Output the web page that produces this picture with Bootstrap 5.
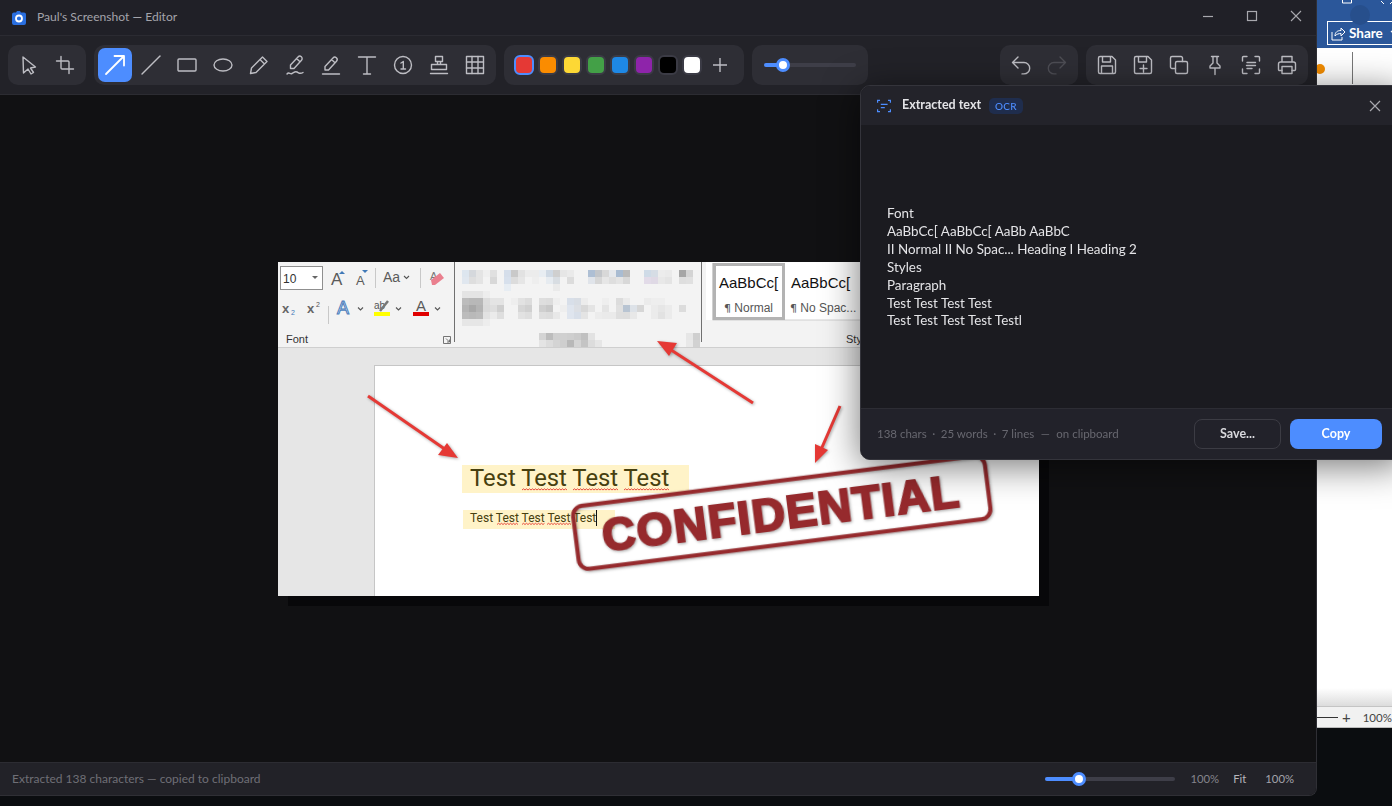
<!DOCTYPE html>
<html lang="en">
<head>
<meta charset="utf-8">
<title>Paul's Screenshot — Editor</title>
<link rel="stylesheet" href="https://cdn.jsdelivr.net/npm/bootstrap@5.3.0/dist/css/bootstrap.min.css">
<style>
html,body{height:100%;margin:0;overflow:hidden;background:#0b0d10;font-family:Lato,"Liberation Sans",sans-serif}
.desk{width:1392px;height:806px;overflow:hidden;position:relative}
.appwin{width:1317px;height:796px;background:#111113;border-right:1px solid #2f2f35;border-bottom:1px solid #2f2f35;border-bottom-right-radius:8px;overflow:hidden;flex:none}
.titlebar{height:36px;background:#202027;border-bottom:1px solid #2b2b32;color:#a4a4ab;font-size:12.100px;padding-left:12px}
.titlebar .ttl{margin-left:11px}
.winrow{margin-right:-2px;align-self:flex-start}
.winbtn{width:44px;height:32px;color:#a8a8ae}
.toolbar{height:59px;background:#222228;border-bottom:1px solid #2c2c32;padding:9px 8px 0 8px}
.tgroup{height:40px;background:#2e2e35;border-radius:10px;padding:3px 4px;gap:2px}
.tbtn{width:34px;height:34px;border-radius:7px;color:#bdbdc3;flex:none}
.tbtn svg{width:24px;height:24px;fill:none;stroke:currentColor;stroke-width:1.4;stroke-linecap:round;stroke-linejoin:round}
.tbtn.on{background:#4d8dff;color:#fff}
.tbtn.off{color:#4e4e55}
.swatches{padding:3px 10px;gap:4px}
.swatch{width:20px;height:20px;border-radius:6px;border:2px solid #3b3b45;flex:none}
.swatch.cur{border-color:#4d8dff}
.plusbtn{width:28px;height:34px;color:#bdbdc3}
.sizegrp{width:116px;padding:0 12px}
.sliderbar{height:4px;background:#3e3e48;border-radius:2px;position:relative}
.sliderbar i{display:block;height:4px;background:#4d8dff;border-radius:2px}
.sliderbar b{position:absolute;top:-5px;width:14px;height:14px;border-radius:50%;background:#fff;border:3px solid #4d8dff}
.canvasarea{flex:1 1 auto;min-height:0;background:#111113}
.shot{width:761px;height:334px;box-shadow:10px 10px 0 #08080a;display:block;background:#fff}
.statusline{height:33px;background:#222228;border-top:1px solid #2c2c32;font-size:12px;color:#6f6f76;padding:0 22px 0 12px}
.zoombar{width:130px}
.zdim{color:#85858c;margin-left:15px;font-size:11.300px}
.zlit{color:#b6b6bc;margin-left:14px;font-size:11.300px}
.zlit2{color:#a4a4ab;margin-left:19px;font-size:11.300px}
.wordbit{width:75px;height:728px;background:#fff;flex:none;position:relative;overflow:hidden;border-bottom:1px solid #bbb}
.wordtop{height:48px;background:#2b579a;padding:21px 0 0 10px}
.wordshare{width:76px;height:24px;border:1.5px solid #fff;color:#fff;font-size:13.500px;font-weight:700;padding-left:3px;gap:3px}
.wordbody{height:658px;padding-top:4px;background:linear-gradient(#fff 640px,#dcdcdc)}
.wordrule{width:1px;height:32px;background:#777;margin-left:35px}
.orangedot{position:absolute;left:-2px;top:64px;width:10px;height:10px;border-radius:50%;background:#f28c00}
.wordavatar{position:absolute;left:33px;top:5px;width:20px;height:20px;border-radius:50%;background:#274f8c}
.wordglyph{position:absolute;left:0;top:0}
.wordstat{height:22px;background:#f1f1f1;border-top:1px solid #c4c4c4;font-size:11.500px;color:#444}
.wordstat i{display:block;width:21px;height:1px;background:#333;margin:0 4px 0 0;flex:none}
.wordstat span{margin-right:12px;font-size:15px;line-height:1;flex:none}
.wordstat em{font-style:normal;flex:none}
.ocrpanel{position:absolute;left:860px;top:85px;width:545px;height:375px;border:1px solid #34343b;border-radius:10px;background:#1b1b20;box-shadow:0 6px 36px rgba(0,0,0,.55);overflow:hidden}
.ocrhead{height:39px;background:#23232a;padding-left:15px}
.ocrhead .ttl2{font-size:12.500px;font-weight:700;color:#e3e3e6;margin-left:10px}
.ocrbadge{background:#1f2d4d;color:#4d8dff;font-size:10px;font-weight:500;border-radius:5px;padding:3px 6px;margin-left:8px;line-height:10px;letter-spacing:.2px}
.ocrx{margin-left:auto;margin-right:23px;color:#a8a8ae}
.ocrbody{height:283px;padding:80px 0 0 26px;font-size:13.400px;line-height:17.900px;color:#e4e4e7;white-space:pre}
.ocrfoot{height:51px;background:#22222a;border-top:1px solid #2d2d34;padding:0 0 0 16px;font-size:11.500px;color:#686870}
.ocrfoot .dotsep{margin:0 5.500px}
.ocrfoot .dashsep{margin:0 6.500px}
.btn.ghostbtn{width:87px;height:30px;font-size:12.500px;font-weight:700;line-height:1;color:#d9d9dd;border:1px solid #3c3c44;border-radius:8px;background:transparent;padding:0;margin-left:auto}
.btn.bluebtn{width:92px;height:30px;font-size:12.500px;font-weight:700;line-height:1;color:#fff;border:0;border-radius:8px;background:#4d8dff;padding:0;margin-left:9px;margin-right:22px}
.annot{filter:drop-shadow(1.5px 1.5px 1.5px rgba(0,0,0,.35))}
.ribtxt{font-family:"Liberation Sans",sans-serif}
.stamptxt{font-family:"Liberation Sans",sans-serif;font-weight:700}
</style>
</head>
<body>
<div class="desk d-flex align-items-start">
  <div class="appwin d-flex flex-column">
    <div class="titlebar d-flex align-items-center">
      <svg width="14" height="15" viewBox="0 0 14 15"><path d="M2 2.500h2L5 1h3l1 1.500h3a2 2 0 0 1 2 2V13a2 2 0 0 1-2 2H2a2 2 0 0 1-2-2V4.500a2 2 0 0 1 2-2z" fill="#2a6fe0"/><circle cx="7" cy="8.500" r="3" fill="none" stroke="#fff" stroke-width="1.800"/></svg>
      <span class="ttl">Paul's Screenshot — Editor</span>
      <div class="d-flex ms-auto winrow">
        <div class="winbtn d-flex align-items-center justify-content-center"><svg width="12" height="12" viewBox="0 0 12 12"><path d="M1 6.500h10" stroke="currentColor" stroke-width="1.200"/></svg></div>
        <div class="winbtn d-flex align-items-center justify-content-center"><svg width="12" height="12" viewBox="0 0 12 12"><rect x="1.500" y="1.500" width="9" height="9" fill="none" stroke="currentColor" stroke-width="1.200"/></svg></div>
        <div class="winbtn d-flex align-items-center justify-content-center"><svg width="12" height="12" viewBox="0 0 12 12"><path d="M1 1l10 10M11 1L1 11" stroke="currentColor" stroke-width="1.100"/></svg></div>
      </div>
    </div>
    <div class="toolbar d-flex align-items-start">
      <div class="tgroup d-flex">
        <div class="tbtn d-flex align-items-center justify-content-center"><svg viewBox="0 0 24 24"><path d="M6 4l.5 16 4.500-4 3 5 2.500-1.500-3-4.500 5-1z"/></svg></div>
        <div class="tbtn d-flex align-items-center justify-content-center"><svg viewBox="0 0 24 24"><path d="M8 3.500V15a1 1 0 0 0 1 1h11.500M3.500 8H15a1 1 0 0 1 1 1v11.500"/></svg></div>
      </div>
      <div class="tgroup d-flex ms-2">
        <div class="tbtn on d-flex align-items-center justify-content-center"><svg viewBox="0 0 24 24"><path stroke-width="1.800" d="M3 21L21 3M11.500 3H21v9.500"/></svg></div>
        <div class="tbtn d-flex align-items-center justify-content-center"><svg viewBox="0 0 24 24"><path d="M3 21L21 3"/></svg></div>
        <div class="tbtn d-flex align-items-center justify-content-center"><svg viewBox="0 0 24 24"><rect x="3" y="6" width="18" height="12" rx="1"/></svg></div>
        <div class="tbtn d-flex align-items-center justify-content-center"><svg viewBox="0 0 24 24"><ellipse cx="12" cy="12" rx="9" ry="6"/></svg></div>
        <div class="tbtn d-flex align-items-center justify-content-center"><svg viewBox="0 0 24 24"><path d="M3.500 20.500l1-5.500L15.500 4l4.500 4.500L9 19.500zM13 6.500L17.500 11"/></svg></div>
        <div class="tbtn d-flex align-items-center justify-content-center"><svg viewBox="0 0 24 24"><path d="M7.500 15.500v-3.500l7.500-8a2.200 2.200 0 0 1 3.500 3.200l-7.500 8.300zM13.500 5.500l3.500 3.200M4 21c2-2.500 3 .5 5-.5s3-2.500 5-1.500 3 2.500 6 .5"/></svg></div>
        <div class="tbtn d-flex align-items-center justify-content-center"><svg viewBox="0 0 24 24"><path d="M6 17v-3.500l8-8.500a2.200 2.200 0 0 1 3.500 3.200l-8 8.800zM12.500 6.500l3.500 3.200M3.500 21h17"/></svg></div>
        <div class="tbtn d-flex align-items-center justify-content-center"><svg viewBox="0 0 24 24"><path d="M3.500 4h17M12 4v17M8.500 21h7"/></svg></div>
        <div class="tbtn d-flex align-items-center justify-content-center"><svg viewBox="0 0 24 24"><circle cx="12" cy="12" r="8.500"/><path d="M10 10l2.300-1.500V16M10 16h4.500"/></svg></div>
        <div class="tbtn d-flex align-items-center justify-content-center"><svg viewBox="0 0 24 24"><path d="M8.500 3.500h7v5h-7zM10.500 8.500v3M13.500 8.500v3M4.500 11.500h15v5h-15zM3.500 20.500h17"/></svg></div>
        <div class="tbtn d-flex align-items-center justify-content-center"><svg viewBox="0 0 24 24"><rect x="3.500" y="3.500" width="17" height="17"/><path d="M9 3.500v17M15 3.500v17M3.500 9h17M3.500 15h17"/></svg></div>
      </div>
      <div class="tgroup swatches d-flex align-items-center ms-2">
        <span class="swatch cur" style="background:#e53935"></span>
        <span class="swatch" style="background:#fb8c00"></span>
        <span class="swatch" style="background:#fdd835"></span>
        <span class="swatch" style="background:#43a047"></span>
        <span class="swatch" style="background:#1e88e5"></span>
        <span class="swatch" style="background:#8e24aa"></span>
        <span class="swatch" style="background:#000"></span>
        <span class="swatch" style="background:#fff"></span>
        <div class="plusbtn d-flex align-items-center justify-content-center"><svg width="16" height="16" viewBox="0 0 16 16"><path d="M8 1v14M1 8h14" stroke="currentColor" stroke-width="1.400"/></svg></div>
      </div>
      <div class="tgroup sizegrp d-flex align-items-center ms-2">
        <div class="sliderbar w-100"><i style="width:20%"></i><b style="left:12px"></b></div>
      </div>
      <div class="tgroup d-flex ms-auto">
        <div class="tbtn d-flex align-items-center justify-content-center"><svg viewBox="0 0 24 24"><path d="M9 15L3.500 9.500 9 4M3.500 9.500H15a5.700 5.700 0 0 1 0 11.400h-2"/></svg></div>
        <div class="tbtn off d-flex align-items-center justify-content-center"><svg viewBox="0 0 24 24"><path d="M15 15l5.500-5.500L15 4M20.500 9.500H9a5.700 5.700 0 0 0 0 11.400h2"/></svg></div>
      </div>
      <div class="tgroup d-flex ms-2">
        <div class="tbtn d-flex align-items-center justify-content-center"><svg viewBox="0 0 24 24"><path d="M5 3.500h12l3.500 3.500v12a1.500 1.500 0 0 1-1.500 1.500H5A1.500 1.500 0 0 1 3.500 19V5A1.500 1.500 0 0 1 5 3.500zM7.500 3.500V9h8V3.500M6.500 20.500v-7.500h11v7.500"/></svg></div>
        <div class="tbtn d-flex align-items-center justify-content-center"><svg viewBox="0 0 24 24"><path d="M5 3.500h12l3.500 3.500v12a1.500 1.500 0 0 1-1.500 1.500H5A1.500 1.500 0 0 1 3.500 19V5A1.500 1.500 0 0 1 5 3.500zM7.500 3.500V9h8V3.500M12.500 12v7M9 15.500h7"/></svg></div>
        <div class="tbtn d-flex align-items-center justify-content-center"><svg viewBox="0 0 24 24"><path d="M8.500 15.500H5A1.500 1.500 0 0 1 3.500 14V5A1.500 1.500 0 0 1 5 3.500h9A1.500 1.500 0 0 1 15.500 5v3.500"/><rect x="8.500" y="8.500" width="12" height="12" rx="1.500"/></svg></div>
        <div class="tbtn d-flex align-items-center justify-content-center"><svg viewBox="0 0 24 24"><path d="M8.500 3.500h7M10 3.500v6.500l-3 3v2h10v-2l-3-3V3.500M12 15v6.500"/></svg></div>
        <div class="tbtn d-flex align-items-center justify-content-center"><svg viewBox="0 0 24 24"><path d="M3.500 8V4.500a1 1 0 0 1 1-1H8M16 3.500h3.500a1 1 0 0 1 1 1V8M20.500 16v3.500a1 1 0 0 1-1 1H16M8 20.500H4.500a1 1 0 0 1-1-1V16M8 9.500h8.500M7.500 12.500h9M8 15.500h5"/></svg></div>
        <div class="tbtn d-flex align-items-center justify-content-center"><svg viewBox="0 0 24 24"><path d="M7 9V3.500h10V9M7 17.500H4.500a1 1 0 0 1-1-1V11a2 2 0 0 1 2-2h13a2 2 0 0 1 2 2v5.500a1 1 0 0 1-1 1H17"/><rect x="7" y="13.500" width="10" height="7"/></svg></div>
      </div>
    </div>
    <div class="canvasarea d-flex align-items-center justify-content-center">
      <svg class="shot" id="shot" width="761" height="334" viewBox="278 262 761 334" xmlns="http://www.w3.org/2000/svg">
        <rect x="278" y="262" width="761" height="86" fill="#f3f3f3"/>
        <rect x="278" y="347" width="761" height="1.500" fill="#cfcfcf"/>
        <rect x="278" y="348" width="761" height="248" fill="#e6e6e6"/>
        <rect x="374.500" y="365.500" width="680" height="240" fill="#fff" stroke="#c6c6c6"/>
        <g id="mosaic" shape-rendering="crispEdges"></g>
        <g class="ribtxt">
          <rect x="280.500" y="266.500" width="42" height="23" fill="#fff" stroke="#8f8f8f"/>
          <text x="283" y="283" font-size="12" fill="#333">10</text>
          <path d="M312 276h6l-3 3z" fill="#666"/>
          <text x="331" y="285" font-size="17" fill="#5a5a5a">A</text><path d="M339 274l3-3 3 3z" fill="#3f79b8"/>
          <text x="356" y="285" font-size="13" fill="#5a5a5a">A</text><path d="M362 270h6l-3 3z" fill="#3f79b8"/>
          <path d="M375.500 268v20M420.500 268v20M328.500 306v18" stroke="#c8c8c8"/>
          <text x="383" y="282" font-size="14" fill="#5a5a5a">Aa</text>
          <path d="M404 276l2.500 2.500 2.500-2.500M358 307.500l2.500 2.500 2.500-2.500M396 307.500l2.500 2.500 2.500-2.500M435 307.500l2.500 2.500 2.500-2.500" fill="none" stroke="#555" stroke-width="1.100"/>
          <text x="430" y="280" font-size="11" fill="#777">A</text>
          <path d="M431 280l9-7 4 5-9 7h-3z" fill="#ea7f8e"/>
          <text x="282" y="313" font-size="13" font-weight="700" fill="#666">x</text><text x="291" y="315" font-size="7" fill="#3f79b8">2</text>
          <text x="307" y="313" font-size="13" font-weight="700" fill="#666">x</text><text x="316" y="307" font-size="7" fill="#555">2</text>
          <text x="337" y="314" font-size="18" fill="#e9f1fa" stroke="#4a7dbb" stroke-width="1">A</text>
          <text x="374" y="309" font-size="10" fill="#555">ab</text>
          <path d="M380 311l8-10" stroke="#777" stroke-width="2.500"/>
          <rect x="374" y="312" width="16" height="4" fill="#ffff00"/>
          <text x="416" y="311" font-size="15" fill="#5a5a5a">A</text>
          <rect x="413" y="312" width="16" height="4" fill="#e00000"/>
          <text x="286" y="343" font-size="11" fill="#333">Font</text>
          <path d="M443.500 336.500h7v7h-7zM446 338.500l3.500 3.500M449.500 339.500V342H447" fill="none" stroke="#666" stroke-width=".9"/>
          <path d="M454.500 262v80M701.500 262v80" stroke="#707070" stroke-width="1"/>
          <rect x="706" y="262" width="160" height="58" fill="#fff"/>
          <path d="M712.500 263v57H860" fill="none" stroke="#d0d0d0"/>
          <rect x="714.500" y="264.500" width="69" height="54" fill="#fff" stroke="#b3b3b3" stroke-width="3"/>
          <text x="719" y="288" font-size="15" fill="#111">AaBbCc[</text>
          <text x="791" y="288" font-size="15" fill="#111">AaBbCc[</text>
          <text x="724" y="312" font-size="12" fill="#555"><tspan font-family="'DejaVu Sans',sans-serif" font-size="11">¶</tspan> Normal</text>
          <text x="790" y="312" font-size="12" fill="#555"><tspan font-family="'DejaVu Sans',sans-serif" font-size="11">¶</tspan> No Spac...</text>
          <text x="846" y="343" font-size="11" fill="#333">Sty</text>
        </g>
        <rect x="462" y="465" width="227" height="28" fill="#fff3c8"/>
        <rect x="463" y="510" width="152" height="19" fill="#fff3c8"/>
        <text x="470" y="486" font-family="Roboto,sans-serif" font-size="23.800" fill="#47400f">Test Test Test Test</text>
        <text x="470" y="522" font-family="Roboto,sans-serif" font-size="12" fill="#47400f">Test Test Test Test Test</text>
        <path d="M596.500 510v16" stroke="#111"/>
        <g id="squig" fill="none" stroke="#e5392f" stroke-width=".9"></g>
        <g class="annot">
          <path d="M368 396L449 452" stroke="#e53935" stroke-width="3" fill="none"/><path d="M458 458l-20-3 9-12z" fill="#e53935"/>
          <path d="M753 403L668 348" stroke="#e53935" stroke-width="3" fill="none"/><path d="M657 341l20 2-8 13z" fill="#e53935"/>
          <path d="M840 406L820 452" stroke="#e53935" stroke-width="3" fill="none"/><path d="M815 463l0-19 13 6z" fill="#e53935"/>
          <g transform="rotate(-7.200 781.800 512.500)">
            <rect x="574.300" y="480.800" width="415" height="63.500" rx="10" fill="none" stroke="#962a2d" stroke-width="4"/>
            <text class="stamptxt" x="781" y="529" text-anchor="middle" font-size="46" letter-spacing="1.500" fill="#962a2d" stroke="#962a2d" stroke-width="2.200">CONFIDENTIAL</text>
          </g>
        </g>
      </svg>
    </div>
    <div class="statusline d-flex align-items-center">
      <span>Extracted 138 characters — copied to clipboard</span>
      <div class="zoombar ms-auto">
        <div class="sliderbar"><i style="width:26%"></i><b style="left:27px"></b></div>
      </div>
      <span class="zdim">100%</span><span class="zlit">Fit</span><span class="zlit2">100%</span>
    </div>
  </div>
  <div class="wordbit">
    <div class="wordtop">
      <div class="wordshare d-flex align-items-center">
        <svg width="15" height="15" viewBox="0 0 15 15" class="flex-shrink-0"><path d="M1 6v8h10v-3M4 10c0-4 2.500-5.500 6-5.500V2l4 4-4 4V7.500C8 7.500 5.500 8 4 10z" fill="none" stroke="#fff"/></svg>Share<svg width="8" height="6" viewBox="0 0 8 6" class="flex-shrink-0 ms-1"><path d="M1 1l3 3 3-3" fill="none" stroke="#fff" stroke-width="1.200"/></svg>
      </div>
    </div>
    <div class="wordbody"><div class="wordrule"></div></div>
    <span class="wordavatar"></span>
    <svg class="wordglyph" width="75" height="5" viewBox="0 0 75 5"><path d="M25.500-3h9v6h-9zM64 1l3 3M76 1l-3 3" fill="none" stroke="#fff"/></svg>
    <span class="orangedot"></span>
    <div class="wordstat d-flex align-items-center"><i></i><span>+</span><em>100%</em></div>
  </div>
  <div class="ocrpanel">
    <div class="ocrhead d-flex align-items-center">
      <svg width="16" height="16" viewBox="0 0 20 20" fill="none" stroke="#4d8dff" stroke-width="1.500"><path d="M2 6V3h3M15 3h3v3M18 14v3h-3M5 17H2v-3M6 8h8.500M6 12h5"/></svg>
      <span class="ttl2">Extracted text</span>
      <span class="ocrbadge">OCR</span>
      <svg class="ocrx" width="12" height="12" viewBox="0 0 12 12"><path d="M1 1l10 10M11 1L1 11" stroke="currentColor" stroke-width="1.200"/></svg>
    </div>
    <div class="ocrbody">Font
AaBbCc[ AaBbCc[ AaBb AaBbC
II Normal II No Spac... Heading I Heading 2
Styles
Paragraph
Test Test Test Test
Test Test Test Test Testl</div>
    <div class="ocrfoot d-flex align-items-center">
      <span>138 chars</span><span class="dotsep">·</span><span>25 words</span><span class="dotsep">·</span><span>7 lines</span><span class="dashsep">—</span><span>on clipboard</span>
      <button class="btn ghostbtn" type="button">Save...</button>
      <button class="btn bluebtn" type="button">Copy</button>
    </div>
  </div>
</div>
<script src="https://cdn.jsdelivr.net/npm/bootstrap@5.3.0/dist/js/bootstrap.bundle.min.js"></script>
<script>
var NS='http://www.w3.org/2000/svg';
var rows={
270:{0:'dde6ef',1:'d5d8dc',2:'e4e4e4',3:'efefef',4:'e0e0e0',6:'d5deea',7:'c9c9c9',8:'e2e2e2',9:'ececec',10:'ececec',11:'e8edf2',12:'cfd9e4',13:'cfcfcf',14:'e6e6e6',15:'eaeaea',18:'aebfd4',19:'c3c6ca',20:'d8d8d8',21:'e5e8ec',22:'a9bcd2',23:'bbbbbb',26:'cfdbe7',27:'d6dde5',28:'ececec',29:'eaeaea',31:'a6a6a6',32:'d4d4d4'},
277:{0:'e0e7ef',1:'dedede',2:'e4e4e4',4:'d8d8d8',6:'d7e0ec',7:'dcdcdc',8:'e6e6e6',10:'eeeeee',12:'e6ebf0',13:'d8dde2',15:'dcdcdc',18:'e0e4ea',19:'d6d6d6',20:'e6e6e6',21:'dedede',22:'e4e4e4',23:'d8d8d8',26:'e2dbe8',27:'dfd9e5',28:'e8e8e8',29:'e4e4e4',31:'dedede',32:'e0e0e0'},
284:{6:'e7edf3',13:'eaeaea'},
291:{0:'e4e4e4',1:'e4e4e4',2:'e4e4e4',3:'ededed'},
298:{0:'bcbcbc',1:'b8b8b8',2:'b8b8b8',3:'dcdcdc',4:'e4e4e4',5:'e4e4e4',7:'eeeeee',8:'e2e2e2',9:'dcdcdc',11:'dedede',12:'dcdcdc',13:'eeeeee',15:'d8dfe9',16:'d8dde4',17:'ececec',20:'eeeeee',22:'dcdcdc',23:'eaeaea',26:'ebebeb',27:'eeeeee',28:'eeeeee'},
305:{0:'b4b4b4',1:'a8a8a8',2:'b4b4b4',3:'dadada',4:'dedede',5:'cfcfcf',8:'d6d6d6',9:'d0d0d0',11:'cfcfcf',12:'c8c8c8',14:'eeeeee',15:'dfe5ee',16:'dcdfe4',17:'d8d8d8',18:'e4e4e4',20:'e4e4e4',22:'e0e0e0',23:'b8c4d2',24:'dde2e8',25:'d6d6d6',27:'ebebeb',28:'e6e6e6',29:'ebebeb',31:'dcdcdc'},
312:{0:'bcbcbc',1:'b9b9b9',2:'bcbcbc',3:'e2e2e2',4:'ebebeb',5:'dedede',8:'e2e2e2',9:'dedede',11:'dedede',12:'dcdcdc',13:'e8e8e8',15:'dfe5ee',16:'d8dfe9',17:'e4e4e4',19:'ececec',20:'eaeaea',21:'eaeaea',22:'dedede',23:'dddddd',24:'e8e8e8',27:'ebebeb',28:'e2e2e2',29:'ebebeb'},
319:{0:'e6e6e6',1:'e6e6e6',2:'e6e6e6',3:'ededed'},
333:{11:'d4d4d4',12:'bcbcbc',13:'cfcfcf',14:'d0d0d0',15:'cecece',16:'cacaca',17:'c0c0c0',18:'e2e2e2',32:'e6e6e6',33:'cfcfcf'},
340:{11:'e4e4e4',12:'dcdcdc',13:'d4d4d4',14:'cecece',15:'b8b8b8',16:'d4d4d4',17:'c4c4c4',18:'dcdcdc',19:'e6e6e6',32:'e8e8e8',33:'d2d2d2'}
};
var m=document.getElementById('mosaic');
Object.keys(rows).forEach(function(y){Object.keys(rows[y]).forEach(function(k){
  var r=document.createElementNS(NS,'rect');
  r.setAttribute('x',462+7*k);r.setAttribute('y',y);r.setAttribute('width',7);r.setAttribute('height',7);r.setAttribute('fill','#'+rows[y][k]);m.appendChild(r);
});});
var s=document.getElementById('squig');
[[522,567,490],[573,619,490],[624,670,490],[497,518,524.500],[522,545,524.500],[547,571,524.500]].forEach(function(a){
  var d='M'+a[0]+' '+a[2],up=1;
  for(var x=a[0]+1.5;x<=a[1];x+=1.5){d+='L'+x+' '+(a[2]+(up?-1.200:0));up=!up;}
  var p=document.createElementNS(NS,'path');p.setAttribute('d',d);s.appendChild(p);
});
</script>
</body>
</html>
